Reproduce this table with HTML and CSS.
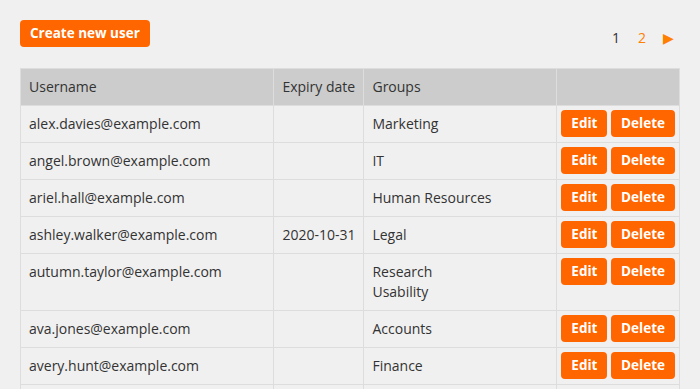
FILE: index.html
```html
<!DOCTYPE html>
<html lang="en">
  <head>
    <meta charset="UTF-8" />
    <meta name="viewport" content="width=device-width, initial-scale=1.0" />
    <title>Users</title>
    <link rel="stylesheet" href="styles.css">
  </head>
  <body>
    <div class="toolbar">
      <button class="btn">Create new user</button>
      <div class="pager">
        <span class="page current">1</span>
        <a class="page" href="#">2</a>
        <a class="page next" href="#">&#9654;</a>
      </div>
    </div>

    <table class="users">
      <thead>
        <tr>
          <th class="col-user">Username</th>
          <th class="col-expiry">Expiry date</th>
          <th class="col-groups">Groups</th>
          <th class="col-actions"></th>
        </tr>
      </thead>
      <tbody>
        <tr>
          <td>alex.davies@example.com</td>
          <td></td>
          <td>Marketing</td>
          <td class="actions"><button class="btn">Edit</button> <button class="btn">Delete</button></td>
        </tr>
        <tr>
          <td>angel.brown@example.com</td>
          <td></td>
          <td>IT</td>
          <td class="actions"><button class="btn">Edit</button> <button class="btn">Delete</button></td>
        </tr>
        <tr>
          <td>ariel.hall@example.com</td>
          <td></td>
          <td>Human Resources</td>
          <td class="actions"><button class="btn">Edit</button> <button class="btn">Delete</button></td>
        </tr>
        <tr>
          <td>ashley.walker@example.com</td>
          <td>2020-10-31</td>
          <td>Legal</td>
          <td class="actions"><button class="btn">Edit</button> <button class="btn">Delete</button></td>
        </tr>
        <tr>
          <td>autumn.taylor@example.com</td>
          <td></td>
          <td>Research<br />Usability</td>
          <td class="actions"><button class="btn">Edit</button> <button class="btn">Delete</button></td>
        </tr>
        <tr>
          <td>ava.jones@example.com</td>
          <td></td>
          <td>Accounts</td>
          <td class="actions"><button class="btn">Edit</button> <button class="btn">Delete</button></td>
        </tr>
        <tr>
          <td>avery.hunt@example.com</td>
          <td></td>
          <td>Finance</td>
          <td class="actions"><button class="btn">Edit</button> <button class="btn">Delete</button></td>
        </tr>
        <tr>
          <td>bailey.king@example.com</td>
          <td></td>
          <td>Sales</td>
          <td class="actions"><button class="btn">Edit</button> <button class="btn">Delete</button></td>
        </tr>
      </tbody>
    </table>
  </body>
</html>
```

FILE: styles.css
```css
body {
  font-family: "Open Sans", Arial, sans-serif;
  font-size: 14px;
  line-height: 20px;
  margin: 0;
  padding: 20px;
  background-color: #f0f0f0;
  color: #333;
}
.toolbar {
  display: flex;
  justify-content: space-between;
  align-items: flex-start;
  margin-bottom: 20px;
}
.btn {
  font-family: inherit;
  font-size: 13.5px;
  font-weight: bold;
  line-height: 19px;
  background-color: #f60;
  color: #fff;
  border: none;
  border-radius: 4px;
  padding: 4px 10px;
  cursor: pointer;
}
.btn:hover {
  background-color: #e05a00;
}
.pager {
  display: flex;
  gap: 12px;
  padding-top: 8px;
  padding-right: 5px;
}
.page {
  color: #333;
  text-decoration: none;
  min-width: 14px;
  text-align: center;
}
a.page {
  color: #ff7f00;
}
.next {
  font-size: 14px;
}
.users {
  width: 660px;
  border-collapse: collapse;
  border: 1px solid #ddd;
}
.users th,
.users td {
  border: 1px solid #ddd;
  padding: 8px 8px;
  text-align: left;
  vertical-align: top;
  white-space: nowrap;
}
.users th {
  background-color: #ccc;
  font-weight: normal;
}
.col-user {
  width: 238px;
}
.col-expiry {
  width: 73px;
}
.col-groups {
  width: 178px;
}
.users td.actions {
  padding: 4px 4px;
}
```
